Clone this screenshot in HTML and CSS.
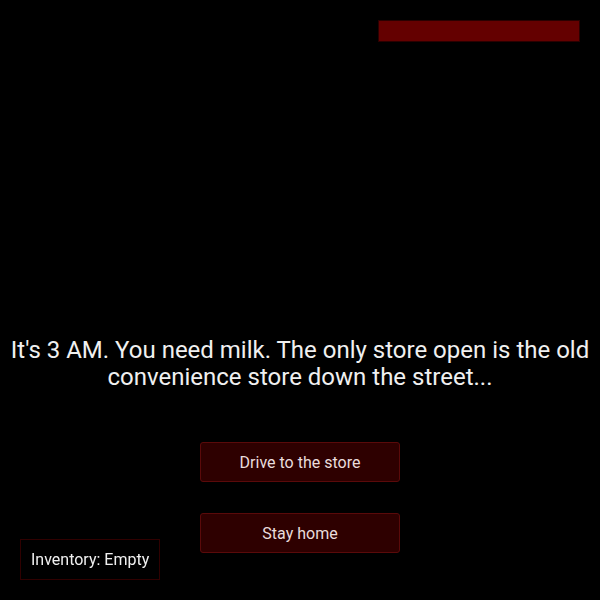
FILE: index.html
```html
<!DOCTYPE html>
<html lang="en">
<head>
  <meta charset="UTF-8">
  <title>3 AM</title>
  <link rel="stylesheet" href="styles.css">
</head>
<body>

  <div class="health-bar">
    <div class="health-fill" id="healthFill"></div>
  </div>

  <main class="scene">
    <p class="story" id="storyText">It's 3 AM. You need milk. The only store open is the old convenience store down the street...</p>

    <div class="choices" id="choices">
      <button class="choice">Drive to the store</button>
      <button class="choice">Stay home</button>
    </div>
  </main>

  <div class="inventory" id="inventory">Inventory: Empty</div>

</body>
</html>
```

FILE: styles.css
```css
:root {
  --blood: #640000;
  --button-bg: #2e0000;
  --button-border: #5a0a0a;
  --text: #f0f0f0;
}

* {
  box-sizing: border-box;
}

body {
  margin: 0;
  background: #000;
  color: var(--text);
  font-family: Roboto, "Liberation Sans", sans-serif;
  min-height: 100vh;
}

.health-bar {
  position: fixed;
  top: 20px;
  right: 20px;
  width: 202px;
  height: 22px;
  background: #1a0000;
  border: 1px solid #2a0000;
}

.health-fill {
  width: 100%;
  height: 100%;
  background: var(--blood);
}

.scene {
  display: flex;
  flex-direction: column;
  align-items: center;
  padding: 337px 10px 0;
}

.story {
  margin: 0 0 51px;
  font-size: 24px;
  line-height: 27px;
  text-align: center;
}

.choices {
  display: flex;
  flex-direction: column;
  gap: 31px;
}

.choice {
  width: 200px;
  height: 40px;
  background: var(--button-bg);
  color: #eadcdc;
  border: 1px solid var(--button-border);
  border-radius: 3px;
  font-family: inherit;
  font-size: 16px;
  cursor: pointer;
}

.choice:hover {
  background: #440000;
}

.inventory {
  position: fixed;
  left: 20px;
  bottom: 20px;
  padding: 10px;
  border: 1px solid #300000;
  font-size: 16px;
}
```
